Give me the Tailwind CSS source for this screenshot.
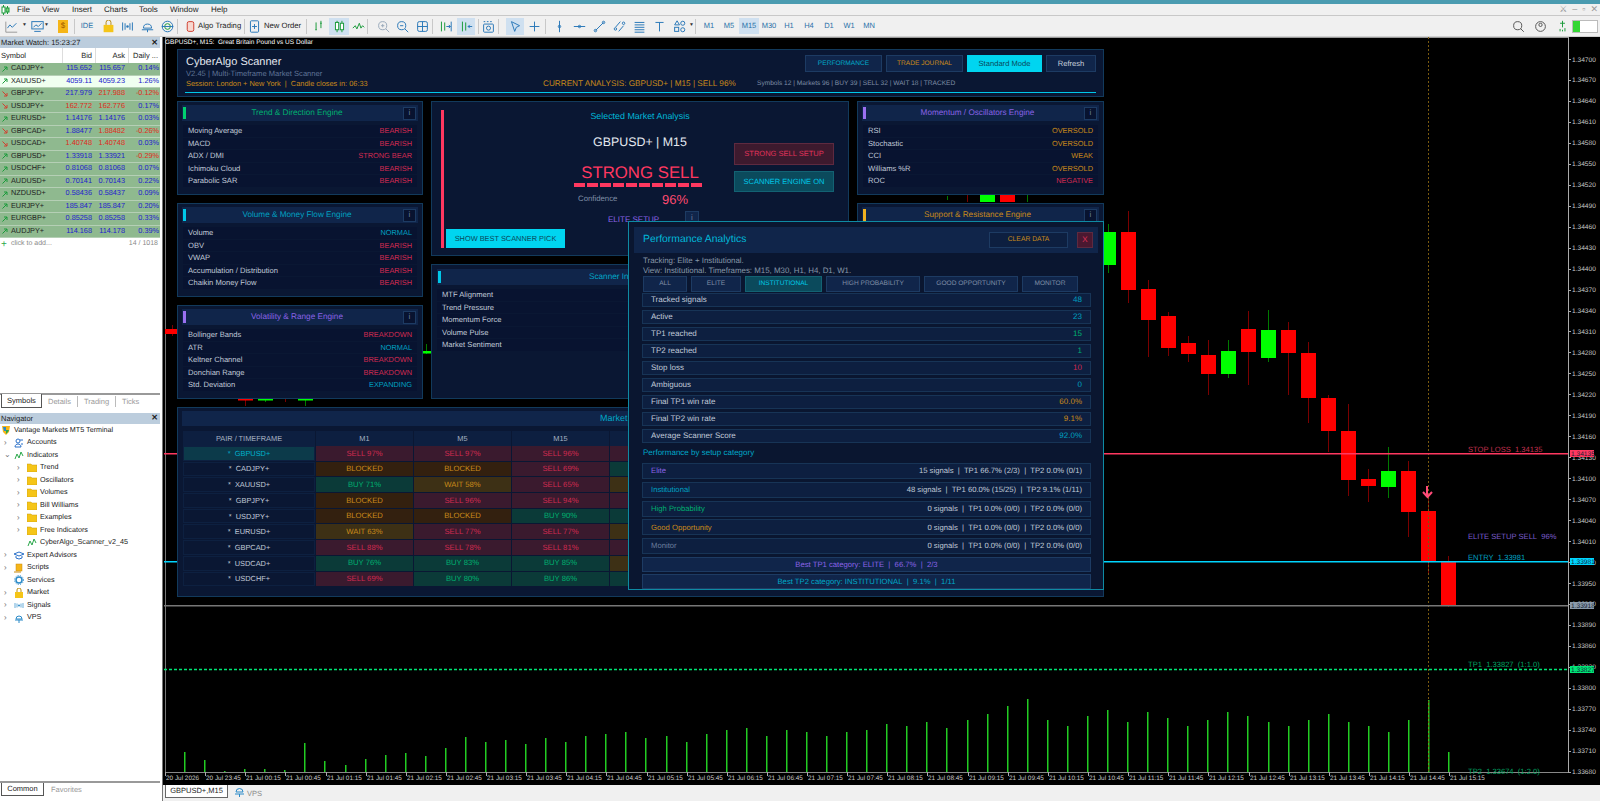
<!DOCTYPE html>
<html lang="en">
<head>
<meta charset="UTF-8">
<title>MT5 CyberAlgo Scanner</title>
<script src="https://cdn.jsdelivr.net/npm/@tailwindcss/browser@4"></script>
</head>
<body class="w-[1600px] h-[801px] overflow-hidden bg-[#f0f0f0] text-black font-['Liberation_Sans',sans-serif] [text-rendering:geometricPrecision]">

<!-- title strip -->
<div class="h-[4px] bg-[#4a9bb0]"></div>

<!-- menu -->
<div class="h-[12px] flex items-center border-b border-[#c8c8c8] text-[8px] text-[#222] relative">
  <svg class="ml-[1px] w-[9px] h-[10px]" viewBox="0 0 9 10"><path d="M2.5 0v10M6.5 1v8" stroke="#1a9a3a"/><rect x="1" y="2" width="3" height="6" fill="#fff" stroke="#1a9a3a"/><rect x="5" y="3" width="3" height="4" fill="#7ad07a" stroke="#1a9a3a"/></svg>
  <span class="ml-[7px] w-[25px]">File</span><span class="w-[30px]">View</span><span class="w-[32px]">Insert</span><span class="w-[35px]">Charts</span><span class="w-[31px]">Tools</span><span class="w-[41px]">Window</span><span>Help</span>
  <div class="ml-auto mr-[2px] flex items-center gap-[5px] text-[#999] text-[9px]"><span>⚔</span><span>–</span><span>▫</span><span>✕</span></div>
</div>

<!-- toolbar -->
<div id="toolbar" class="h-[21px] flex items-center border-b border-[#d0d0d0] text-[7.7px] text-[#222]"></div>

<div class="flex h-[764px]">
  <!-- left column -->
  <aside class="w-[163px] shrink-0 flex flex-col bg-white pr-[2px] border-r border-[#777]">
    <div class="h-[11px] bg-[#bccddd] flex items-center justify-between pl-[1px] pr-[2px] text-[7.5px] text-[#222]"><span>Market Watch: 15:23:27</span><span class="font-bold text-[8px]">✕</span></div>
    <div class="h-[15px] grid grid-cols-[62px_33px_33px_33px] items-center text-[7.5px] text-[#222]">
      <span class="pl-[1px]">Symbol</span><span class="text-right pr-[3px] border-l border-[#ddd] h-full leading-[15px]">Bid</span><span class="text-right pr-[3px] border-l border-[#ddd] h-full leading-[15px]">Ask</span><span class="text-right pr-[3px] border-l border-[#ddd] h-full leading-[15px]">Daily ...</span>
    </div>
    <div id="watch"></div>
    <div class="h-[13px] flex items-center text-[7px] text-[#888]"><span class="text-[#2aa84a] text-[10px] w-[11px] pl-[1px] leading-none">+</span><span>click to add...</span><span class="ml-auto mr-[2px]">14 / 1018</span></div>
    <div class="h-[141.6px] shrink-0"></div>
    <div class="h-[15px] border-t-2 border-[#999] flex text-[7.5px] text-[#999] items-center">
      <span class="ml-[1px] w-[41px] h-[14px] -mt-[1px] flex items-center justify-center bg-white border-l border-r border-b border-[#555] text-[#222]">Symbols</span>
      <span class="ml-[6px] pr-[6px] border-r border-[#bbb]">Details</span><span class="ml-[6px] pr-[6px] border-r border-[#bbb]">Trading</span><span class="ml-[6px]">Ticks</span>
    </div>
    <div class="mt-[5px] h-[11px] bg-[#bccddd] flex items-center justify-between pl-[1px] pr-[2px] text-[7.5px] text-[#222]"><span>Navigator</span><span class="font-bold text-[8px]">✕</span></div>
    <div id="nav"></div>
    <div class="flex-1"></div>
    <div class="h-[15px] border-t-2 border-[#999] flex text-[7.5px] text-[#999] items-center mb-[5px]">
      <span class="ml-[1px] w-[43px] h-[13px] -mt-[1px] flex items-center justify-center bg-white border-l border-r border-b border-[#555] text-[#222]">Common</span>
      <span class="ml-[7px]">Favorites</span>
    </div>
  </aside>

  <!-- chart -->
  <main class="flex-1 flex flex-col min-w-0">
    <div class="relative h-[748px] bg-black overflow-hidden">
      <svg id="chart" class="absolute inset-0" width="1437" height="748" viewBox="163 37 1437 748"></svg>
      <div class="absolute left-[2px] top-[1px] text-[6.5px] text-white">GBPUSD+, M15:&nbsp; Great Britain Pound vs US Dollar</div>

      <!-- scanner overlay -->
      <div class="absolute left-[14px] top-[12px] w-[927px] flex flex-col gap-[4px] text-[#c0cad8]">
        <div class="h-[48px] bg-[#0a1733] border border-[#123a5c] pl-[8px] pr-[7px] relative">
          <div class="flex items-start justify-between">
            <div>
              <div class="mt-[6px] text-[11px] leading-[13px] text-[#e4e8f0]">CyberAlgo Scanner</div>
              <div class="text-[7.6px] leading-[9px] text-[#5f7396]">V2.45 | Multi-Timeframe Market Scanner</div>
              <div class="mt-[0.5px] text-[7.4px] leading-[9px] text-[#c98a1a]">Session: London + New York&nbsp; |&nbsp; Candle closes in: 06:33</div>
            </div>
            <div class="mt-[5px] flex gap-[4px] text-[6.6px]">
              <span class="w-[77px] h-[17px] flex items-center justify-center bg-[#10254a] border border-[#1d3b63] text-[#00a8c8]">PERFORMANCE</span>
              <span class="w-[77px] h-[17px] flex items-center justify-center bg-[#10254a] border border-[#1d3b63] text-[#c98a1a]">TRADE JOURNAL</span>
              <span class="w-[75px] h-[17px] flex items-center justify-center bg-[#00d5f0] text-[#0a4a5c] text-[7.6px]">Standard Mode</span>
              <span class="w-[50px] h-[17px] flex items-center justify-center bg-[#10254a] border border-[#1d3b63] text-[#c8d0dc] text-[7.6px]">Refresh</span>
            </div>
          </div>
          <div class="absolute left-[365px] top-[29px] text-[8.2px] leading-[10px] text-[#c98a1a] whitespace-nowrap">CURRENT ANALYSIS: GBPUSD+ | M15 | SELL 96%</div>
          <div class="absolute left-[579px] top-[29px] text-[6.6px] leading-[9px] text-[#7f8ea6] whitespace-nowrap">Symbols 12 | Markets 96 | BUY 39 | SELL 32 | WAIT 18 | TRACKED</div>
          <div class="absolute left-[7px] right-[7px] bottom-[3px] h-[1.5px] bg-[#00c8e8]"></div>
        </div>

        <div class="grid grid-cols-[246px_418px_247px] gap-x-[8px]">
          <div id="colL" class="flex flex-col gap-[8px]"></div>
          <div class="flex flex-col gap-[8px]">
            <div class="h-[155px] bg-[#0a1733] border border-[#123a5c] relative flex">
              <div class="ml-[9px] mt-[8px] w-[3px] h-[138px] bg-[#ff3860]"></div>
              <div class="absolute left-0 right-0 top-[9px] text-center text-[8.9px] leading-[10px] text-[#00b8d9]">Selected Market Analysis</div>
              <div class="absolute left-0 right-0 top-[33px] text-center text-[12.4px] leading-[15px] text-[#e4e8f0]">GBPUSD+ | M15</div>
              <div class="absolute left-0 right-0 top-[61px] text-center text-[16.8px] leading-[20px] text-[#ff3860]">STRONG SELL</div>
              <div class="absolute left-[142px] top-[81px] flex gap-[2px]" id="dash"></div>
              <div class="absolute left-[146px] top-[92px] text-[7.8px] leading-[10px] text-[#7f8ea6]">Confidence</div>
              <div class="absolute left-[230px] top-[90px] text-[13px] leading-[15px] text-[#ff4a70]">96%</div>
              <div class="absolute left-[176px] top-[113px] text-[8px] leading-[10px] text-[#8a63e6]">ELITE SETUP</div>
              <div class="absolute left-[253px] top-[109px] w-[14px] h-[14px] bg-[#10254a] border border-[#1d3b63] text-[8px] flex items-center justify-center text-[#6b7d9e]">i</div>
              <div class="absolute left-[302px] top-[41px] w-[100px] h-[22px] flex items-center justify-center bg-[#3d1a2e] border border-[#5e2a40] text-[7.5px] text-[#e0325a]">STRONG SELL SETUP</div>
              <div class="absolute left-[302px] top-[69px] w-[100px] h-[21px] flex items-center justify-center bg-[#0b4a5c] border border-[#136273] text-[7.5px] text-[#00c8e8]">SCANNER ENGINE ON</div>
              <div class="absolute left-[14px] top-[127px] w-[119px] h-[19px] flex items-center justify-center bg-[#00d5f0] text-[7.4px] text-[#0a4a5c]">SHOW BEST SCANNER PICK</div>
            </div>
            <div class="h-[135px] bg-[#0a1733] border border-[#123a5c] px-[5px] pt-[4px]">
              <div class="h-[16px] bg-[#10254a] flex items-center relative"><span class="ml-[1px] w-[3px] h-[12px] bg-[#00c8e8]"></span><span class="absolute inset-0 flex items-center justify-center text-[8.2px] text-[#00a8c8]">Scanner Intelligence Engine</span></div>
              <div id="intel" class="mt-[4px] flex flex-col gap-[1px]"></div>
            </div>
          </div>
          <div id="colR" class="flex flex-col gap-[8px]"></div>
        </div>

        <div class="mt-[4px] h-[190px] bg-[#0a1733] border border-[#123a5c] px-[4px] pt-[3px]">
          <div class="h-[15px] bg-[#10254a] flex items-center pl-[418px] text-[9px] text-[#00a8c8]">Market</div>
          <div id="matrix" class="mt-[5px] ml-[1px] grid grid-cols-[132px_97px_97px_97px_97px_97px_97px_97px] gap-x-[1px]"></div>
        </div>
      </div>

      <!-- performance popup -->
      <div class="absolute left-[465px] top-[184px] w-[476px] h-[369px] bg-[#0a1630] border border-[#0e8aa3] px-[5px] pt-[5px] text-[8px] text-[#c0cad8]">
        <div class="h-[26px] bg-[#10254a] flex items-center pl-[9px] pr-[5px]">
          <span class="text-[10.4px] text-[#00b8d9]">Performance Analytics</span>
          <span class="ml-auto w-[79px] h-[16px] flex items-center justify-center bg-[#0d1f40] border border-[#1d3b63] text-[6.8px] text-[#c98a1a]">CLEAR DATA</span>
          <span class="ml-[9px] w-[16px] h-[16px] flex items-center justify-center bg-[#4a1830] border border-[#5e2a40] text-[8px] text-[#e0325a]">X</span>
        </div>
        <div class="ml-[9px] mt-[3px] text-[7.9px] leading-[10px] text-[#8898a8]">Tracking: Elite + Institutional.<br>View: Institutional. Timeframes: M15, M30, H1, H4, D1, W1.</div>
        <div class="ml-[9px] flex gap-[4px] text-[6.6px] text-[#7f8ea6]">
          <span class="w-[44px] h-[16px] flex items-center justify-center bg-[#10254a] border border-[#1d3b63]">ALL</span>
          <span class="w-[50px] h-[16px] flex items-center justify-center bg-[#10254a] border border-[#1d3b63]">ELITE</span>
          <span class="w-[77px] h-[16px] flex items-center justify-center bg-[#0b4a5c] border border-[#136273] text-[#00c8e8]">INSTITUTIONAL</span>
          <span class="w-[94px] h-[16px] flex items-center justify-center bg-[#10254a] border border-[#1d3b63]">HIGH PROBABILITY</span>
          <span class="w-[94px] h-[16px] flex items-center justify-center bg-[#10254a] border border-[#1d3b63]">GOOD OPPORTUNITY</span>
          <span class="w-[56px] h-[16px] flex items-center justify-center bg-[#10254a] border border-[#1d3b63]">MONITOR</span>
        </div>
        <div id="stats" class="ml-[8px] mr-[7px] mt-[1px] flex flex-col gap-[3px]"></div>
        <div class="ml-[9px] mt-[5px] text-[8px] leading-[10px] text-[#00a8c8]">Performance by setup category</div>
        <div id="cats" class="ml-[8px] mr-[7px] mt-[5px] flex flex-col gap-[2.8px]"></div>
        <div class="ml-[8px] mr-[7px] mt-[3px] flex flex-col gap-[2px] text-[7.7px]">
          <div class="h-[15px] bg-[#10254a] border border-[#1d3b63] flex items-center justify-center text-[#8a63e6]">Best TP1 category: ELITE&nbsp; |&nbsp; 66.7%&nbsp; |&nbsp; 2/3</div>
          <div class="h-[15px] bg-[#10254a] border border-[#1d3b63] flex items-center justify-center text-[#00a8c8]">Best TP2 category: INSTITUTIONAL&nbsp; |&nbsp; 9.1%&nbsp; |&nbsp; 1/11</div>
        </div>
      </div>
    </div>

    <!-- chart tabs -->
    <div class="h-[16px] flex items-start text-[7.5px] text-[#222]">
      <span class="ml-[2px] w-[63px] h-[13px] flex items-center justify-center bg-white border-l border-r border-b border-[#666]">GBPUSD+,M15</span>
      <svg class="ml-[6px] mt-[1px] w-[11px] h-[12px]" viewBox="0 0 11 12"><path d="M2 6a3.5 3.5 0 0 1 7 0zM1 8h9M5.5 8v3" fill="none" stroke="#2a8ac8"/></svg>
      <span class="ml-[2px] mt-[3px] text-[#888]">VPS</span>
    </div>
  </main>
</div>

<script>
// market watch
const up = '<svg class="w-[6px] h-[6px]" viewBox="0 0 6 6"><path d="M.5 5.5L5 1M2 1h3v3" fill="none" stroke="#1a9a3a"/></svg>';
const dn = '<svg class="w-[6px] h-[6px]" viewBox="0 0 6 6"><path d="M.5 .5L5 5M2 5h3V2" fill="none" stroke="#d04030"/></svg>';
const watchRows = [
  ['CADJPY+','115.652','115.657','0.14%',1,1,1,1],['XAUUSD+','4059.11','4059.23','1.26%',1,1,1,1],
  ['GBPJPY+','217.979','217.988','-0.12%',0,1,0,0],['USDJPY+','162.772','162.776','0.17%',0,0,0,1],
  ['EURUSD+','1.14176','1.14176','0.03%',1,1,1,1],['GBPCAD+','1.88477','1.88482','-0.26%',0,1,0,0],
  ['USDCAD+','1.40748','1.40748','0.03%',0,0,0,1],['GBPUSD+','1.33918','1.33921','-0.29%',1,1,1,0],
  ['USDCHF+','0.81068','0.81068','0.07%',1,1,1,1],['AUDUSD+','0.70141','0.70143','0.22%',1,1,1,1],
  ['NZDUSD+','0.58436','0.58437','0.09%',1,1,1,1],['EURJPY+','185.847','185.847','0.20%',1,1,1,1],
  ['EURGBP+','0.85258','0.85258','0.33%',1,1,1,1],['AUDJPY+','114.168','114.178','0.39%',1,1,1,1]];
document.getElementById('watch').innerHTML = watchRows.map((r,i) => {
  const c = v => v ? 'text-[#2222cc]' : 'text-[#e02a20]';
  const bg = i==1 ? 'bg-[#f0fff0]' : 'bg-[#8fb98f]';
  return `<div class="h-[12.53px] grid grid-cols-[62px_33px_33px_33px] items-center text-[7.3px] ${bg} border-b border-[#b5cfb5]">
    <span class="flex items-center gap-[3px] pl-[2px] text-[#222]">${r[4]?up:dn}${r[0]}</span>
    <span class="text-right pr-[3px] ${c(r[5])}">${r[1]}</span><span class="text-right pr-[3px] ${c(r[6])}">${r[2]}</span><span class="text-right pr-[2px] ${c(r[7])}">${r[3]}</span></div>`;
}).join('');

// navigator tree
const navIco = {
  folder:'<svg class="w-[10px] h-[9px]" viewBox="0 0 10 9"><path d="M0 1h4l1 1h5v7H0z" fill="#f5c518" stroke="#c99a10" stroke-width=".5"/></svg>',
  ind:'<svg class="w-[10px] h-[9px]" viewBox="0 0 10 9"><path d="M1 8l2-5 2 4 2-6 2 4" fill="none" stroke="#2aa84a"/></svg>',
  acc:'<svg class="w-[10px] h-[10px]" viewBox="0 0 10 10"><circle cx="4" cy="3" r="2" fill="none" stroke="#2a70c8"/><path d="M1 9c0-4 6-4 6 0zM6 2h3M7 6h2" fill="none" stroke="#2a70c8"/></svg>',
  ea:'<svg class="w-[10px] h-[9px]" viewBox="0 0 10 9"><path d="M0 3l5-2 5 2-5 2zM2 5v2l3 1 3-1V5" fill="none" stroke="#2a70c8"/></svg>',
  script:'<svg class="w-[10px] h-[10px]" viewBox="0 0 10 10"><rect x="2" y="1" width="6" height="7" fill="#f5b518" stroke="#c98a10" stroke-width=".5"/><path d="M0 9h7" stroke="#c98a10"/></svg>',
  gear:'<svg class="w-[10px] h-[10px]" viewBox="0 0 10 10"><circle cx="5" cy="5" r="3" fill="none" stroke="#2a8ac8" stroke-width="1.5"/><circle cx="5" cy="5" r="4.5" fill="none" stroke="#2a8ac8" stroke-dasharray="1 1.4"/></svg>',
  bag:'<svg class="w-[10px] h-[10px]" viewBox="0 0 10 10"><path d="M1 4h8v6H1z" fill="#f5c518"/><path d="M3 4V2a2 2 0 0 1 4 0v2" fill="none" stroke="#b88a10"/></svg>',
  sig:'<svg class="w-[10px] h-[9px]" viewBox="0 0 10 9"><circle cx="5" cy="4.500" r="1" fill="#2a8ac8"/><path d="M3 2.500v4M7 2.500v4M1 2v5M9 2v5" stroke="#2a8ac8" stroke-width=".7"/></svg>',
  vps:'<svg class="w-[10px] h-[10px]" viewBox="0 0 10 10"><path d="M2 6a3 3 0 0 1 6 0zM1 7h8M5 7v3" fill="none" stroke="#2a8ac8"/></svg>',
  vm:'<svg class="w-[10px] h-[10px]" viewBox="0 0 10 10"><path d="M1 1h8l-1 6-3 3-3-3z" fill="#f5b518"/><path d="M2 2h3v4H3z" fill="#2a8ac8"/><path d="M5 5h3l-1 2-2 2z" fill="#2aa84a"/></svg>'};
const navRows = [
  [0,'vm','Vantage Markets MT5 Terminal',''],[1,'acc','Accounts','›'],[1,'ind','Indicators','⌄'],
  [2,'folder','Trend','›'],[2,'folder','Oscillators','›'],[2,'folder','Volumes','›'],[2,'folder','Bill Williams','›'],
  [2,'folder','Examples','›'],[2,'folder','Free Indicators','›'],[2,'ind','CyberAlgo_Scanner_v2_45',''],
  [1,'ea','Expert Advisors','›'],[1,'script','Scripts','›'],[1,'gear','Services',''],[1,'bag','Market','›'],[1,'sig','Signals','›'],[1,'vps','VPS','›']];
const navPad = ['pl-[1px]','pl-[2px]','pl-[15px]'];
document.getElementById('nav').innerHTML = navRows.map(r => `<div class="h-[12.53px] flex items-center text-[7.2px] text-[#222] whitespace-nowrap ${navPad[r[0]]}">
  ${r[0] ? `<span class="w-[12px] text-[#777] text-[8px] leading-none pl-[2px]">${r[3]}</span>` : ''}
  <span class="flex items-center gap-[3px]">${navIco[r[1]]}<span>${r[2]}</span></span></div>`).join('');

// toolbar: [width of slot, html]
const ti = (w, svg) => `<span class="flex items-center justify-center shrink-0" style="width:${w}px">${svg}</span>`;
const s = (body) => `<svg class="w-[13px] h-[13px]" viewBox="0 0 16 16" fill="none" stroke-width="1.2">${body}</svg>`;
const sep = '<span class="w-[1px] h-[15px] bg-[#c8c8c8] shrink-0"></span>';
const arrow = '<span class="text-[5px] text-[#333] w-[8px] shrink-0">▼</span>';
const arrowTight = '<span class="text-[5px] text-[#333] w-[6px] shrink-0">▼</span>';
const blue = 'stroke="#2a78b8"', grn = 'stroke="#1a9a3a"', gry = 'stroke="#9ab"';
const tf = (t, on) => `<span class="shrink-0 w-[20px] h-[16px] flex items-center justify-center text-[7.5px] text-[#2a70a8] ${on ? 'bg-[#cfe0f0]' : ''}">${t}</span>`;
const tbOn = (svg, w) => `<span class="flex items-center justify-center shrink-0 h-[17px] bg-[#cfe0f0]" style="width:${w}px">${svg}</span>`;
document.getElementById('toolbar').innerHTML = [
  ti(22,s(`<path d="M1 2v13h14" stroke="#999"/><path d="M3 10l3-4 3 3 5-5" ${blue}/>`)),arrow,
  ti(14,s(`<rect x="1" y="2" width="14" height="9" ${blue}/><path d="M3 9l3-3 3 2 4-4" ${blue}/><path d="M4 14h8" ${blue}/>`)),arrow,
  ti(22,'<span class="w-[10px] h-[13px] bg-[#f5b518] text-[8px] text-[#a05a00] flex items-center justify-center">$</span>'),sep,
  ti(24,'<span class="text-[#2a70a8] text-[7.5px]">IDE</span>'),
  ti(18,s(`<path d="M2 6h12v9H2z" fill="#f5c518"/><path d="M5 6V3a3 3 0 0 1 6 0v3" stroke="#b88a10"/>`)),
  ti(20,s(`<circle cx="8" cy="8" r="1.500" fill="#2a78b8"/><path d="M5 4v8M11 4v8M2 3v10M14 3v10" ${blue}/>`)),
  ti(20,s(`<path d="M3 10a5 5 0 0 1 10 0zM1 12h14M8 12v3" ${blue}/>`)),
  ti(20,s(`<circle cx="8" cy="8" r="6.500" ${blue}/><circle cx="8" cy="8" r="3.500" ${grn}/><path d="M1 8h14" ${blue}/>`)),sep,
  ti(4,''),ti(16,s(`<rect x="4" y="2" width="8" height="12" rx="2" fill="#f8d8d0" stroke="#d04030"/>`)),
  '<span class="shrink-0 w-[46px]">Algo Trading</span>',sep,
  ti(19,s(`<rect x="3" y="1" width="10" height="14" rx="1" ${blue}/><path d="M8 5v6M5 8h6" ${blue}/>`)),
  '<span class="shrink-0 w-[42px]">New Order</span>',sep,
  ti(22,s(`<path d="M5 3v9M4 12h2M11 1v9M10 4h2" ${grn}/>`)),
  tbOn(s(`<path d="M5 1v14M11 1v14" ${grn}/><rect x="3" y="3" width="4" height="9" fill="#fff" ${grn}/><rect x="9" y="4" width="4" height="8" fill="#fff" ${grn}/>`),20),
  ti(18,s(`<path d="M1 10l3-3 2 4 3-7 2 6 2-3 2 2" ${grn}/>`)),sep,
  ti(5,''),ti(20,s(`<circle cx="7" cy="7" r="5" ${gry}/><path d="M11 11l4 4M5 7h4M7 5v4" ${gry}/>`)),
  ti(19,s(`<circle cx="7" cy="7" r="5" ${blue}/><path d="M11 11l4 4M5 7h4" ${blue}/>`)),
  ti(20,s(`<rect x="2" y="2" width="12" height="12" rx="2" ${blue}/><path d="M8 2v12M2 8h12" ${blue}/>`)),sep,
  ti(24,s(`<path d="M3 2v12M7 3v10" ${grn}/><path d="M9 8h5M12 6l2 2-2 2M15 2v12" ${blue}/>`)),
  tbOn(s(`<path d="M3 2v12M7 3v10" ${grn}/><path d="M15 8h-5M12 6l-2 2 2 2" ${blue}/>`),18),ti(3,''),sep,
  ti(19,s(`<rect x="2" y="5" width="12" height="10" rx="1" ${blue}/><circle cx="8" cy="10" r="2.500" ${blue}/><path d="M2 2h2M6 2h2M10 2h2" ${blue}/>`)),sep,
  ti(7,''),tbOn(s(`<path d="M3 2l10 5-4 2-2 5z" ${blue}/>`),18),
  ti(21,s(`<path d="M8 2v12M2 8h12" ${blue}/>`)),sep,
  ti(3,''),ti(20,s(`<path d="M8 1v14" ${blue}/><circle cx="8" cy="8" r="1.500" ${blue}/>`)),
  ti(20,s(`<path d="M1 8h14" ${blue}/><circle cx="8" cy="8" r="1.500" ${blue}/>`)),
  ti(20,s(`<path d="M3 13L13 3" ${blue}/><circle cx="3" cy="13" r="1.500" ${blue}/><circle cx="13" cy="3" r="1.500" ${blue}/>`)),
  ti(20,s(`<path d="M3 9l6-7M7 14l6-7" ${blue}/><circle cx="3" cy="11" r="1.500" ${blue}/><circle cx="13" cy="4" r="1.500" ${blue}/>`)),
  ti(20,s(`<path d="M2 3h12M2 6h12M2 9h12M2 12h12M2 15h12" ${blue}/>`)),
  ti(20,s(`<path d="M3 3h10M8 3v11" ${blue}/>`)),
  ti(20,s(`<path d="M5 1l3 5H2z" ${blue}/><circle cx="12" cy="4" r="2.500" ${blue}/><rect x="2" y="9" width="5" height="5" ${blue}/><circle cx="12" cy="12" r="2.500" ${blue}/>`)),arrowTight,sep,
  ti(3,''),tf('M1'),tf('M5'),tf('M15',true),tf('M30'),tf('H1'),tf('H4'),tf('D1'),tf('W1'),tf('MN'),
  '<span class="ml-auto flex items-center gap-[9px] mr-[2px] shrink-0">' +
  s(`<circle cx="7" cy="7" r="5" stroke="#555"/><path d="M10.500 10.500l4 4" stroke="#555"/>`) +
  s(`<circle cx="8" cy="8" r="6" stroke="#555"/><circle cx="8" cy="6" r="2" stroke="#555"/>`) +
  '<span class="flex items-center gap-[3px]">' + s(`<path d="M8 1v8M5 4h6M5 14v-3M8 14v-2M11 14v-4" ${grn}/>`) +
  '<span class="w-[26px] h-[13px] border border-[#bbb] bg-white flex"><span class="w-[7px] bg-[#33d633]"></span></span></span></span>'
].join('');

// scanner cards
const sell = 'text-[#d02a50]', cyan = 'text-[#00a0c0]', amber = 'text-[#c98a1a]';
function card(title, titleCls, accent, rows) {
  return `<div class="h-[94px] bg-[#0a1733] border border-[#123a5c] px-[5px] pt-[3px]">
    <div class="h-[16px] -mx-[1px] bg-[#10254a] flex items-center relative"><span class="ml-[1px] w-[3px] h-[12px] ${accent}"></span>
      <span class="absolute inset-0 flex items-center justify-center text-[8.2px] pr-[6px] ${titleCls}">${title}</span>
      <span class="relative ml-auto mr-[2px] w-[13px] h-[13px] bg-[#081330] border border-[#1d3b63] text-[8px] text-[#6b7d9e] flex items-center justify-center">i</span></div>
    <div class="mt-[4px] flex flex-col gap-[1px]">${rows.map(row).join('')}</div></div>`;
}
function row(r) {
  return `<div class="h-[11.5px] bg-[#081330] pl-[5px] pr-[5px] flex items-center justify-between text-[7.6px] text-[#c0cad8] whitespace-nowrap"><span>${r[0]}</span><span class="text-[7.4px] ${r[2] || ''}">${r[1]}</span></div>`;
}
document.getElementById('colL').innerHTML =
  card('Trend &amp; Direction Engine','text-[#00b070]','bg-[#00d070]',[['Moving Average','BEARISH',sell],['MACD','BEARISH',sell],['ADX / DMI','STRONG BEAR',sell],['Ichimoku Cloud','BEARISH',sell],['Parabolic SAR','BEARISH',sell]]) +
  card('Volume &amp; Money Flow Engine','text-[#00a0c0]','bg-[#00c8e8]',[['Volume','NORMAL',cyan],['OBV','BEARISH',sell],['VWAP','BEARISH',sell],['Accumulation / Distribution','BEARISH',sell],['Chaikin Money Flow','BEARISH',sell]]) +
  card('Volatility &amp; Range Engine','text-[#8a63e6]','bg-[#9a70f0]',[['Bollinger Bands','BREAKDOWN',sell],['ATR','NORMAL',cyan],['Keltner Channel','BREAKDOWN',sell],['Donchian Range','BREAKDOWN',sell],['Std. Deviation','EXPANDING',cyan]]);
document.getElementById('colR').innerHTML =
  card('Momentum / Oscillators Engine','text-[#8a63e6]','bg-[#9a70f0]',[['RSI','OVERSOLD',amber],['Stochastic','OVERSOLD',amber],['CCI','WEAK',amber],['Williams %R','OVERSOLD',amber],['ROC','NEGATIVE',sell]]) +
  card('Support &amp; Resistance Engine','text-[#c98a1a]','bg-[#f0b020]',[]);
document.getElementById('intel').innerHTML = ['MTF Alignment','Trend Pressure','Momentum Force','Volume Pulse','Market Sentiment'].map(t => row([t,''])).join('');
document.getElementById('dash').innerHTML = Array(10).fill('<span class="w-[11px] h-[4px] bg-[#ff3860]"></span>').join('');

// market matrix
const cellCls = {S:'bg-[#3a1a2e] text-[#d02a50]',B:'bg-[#33200f] text-[#c98a1a]',U:'bg-[#0b3a38] text-[#00b070]',W:'bg-[#3d3015] text-[#c98a1a]'};
const cellTxt = {S:'SELL',B:'BLOCKED',U:'BUY',W:'WAIT'};
const matrix = [
  ['GBPUSD+','S97','S97','S96','S'],['CADJPY+','B','B','S69','U'],['XAUUSD+','U71','W58','S65','W'],
  ['GBPJPY+','B','S96','S94','S'],['USDJPY+','B','B','U90','U'],['EURUSD+','W63','S77','S77','W'],
  ['GBPCAD+','S88','S78','S81','S'],['USDCAD+','U76','U83','U85','W'],['USDCHF+','S69','U80','U86','U']];
let mx = ['PAIR / TIMEFRAME','M1','M5','M15','','','',''].map(t => `<div class="h-[15px] bg-[#0d1f40] flex items-center justify-center text-[7.4px] text-[#a8b4c4]">${t}</div>`).join('');
matrix.forEach((r,i) => {
  mx += `<div class="h-[14.7px] mb-[1px] flex items-center justify-center text-[7.4px] border border-[#0d2040] ${i==0 ? 'bg-[#0c3a4a] text-[#00b0cc]' : 'bg-[#0a1733] text-[#c0cad8]'}">*&nbsp; ${r[0]}</div>`;
  for (let c = 1; c <= 7; c++) {
    const v = r[Math.min(c,4)], k = v[0], n = v.slice(1);
    mx += `<div class="h-[14.7px] mb-[1px] flex items-center justify-center text-[7.7px] ${cellCls[k]}">${c <= 3 ? cellTxt[k] + (n ? ' ' + n + '%' : '') : ''}</div>`;
  }
});
document.getElementById('matrix').innerHTML = mx;

// performance rows
const g = 'text-[#00b070]', b = 'text-[#00a0c0]';
document.getElementById('stats').innerHTML = [['Tracked signals','48',b],['Active','23',b],['TP1 reached','15',g],['TP2 reached','1',g],['Stop loss','10',sell],['Ambiguous','0',b],['Final TP1 win rate','60.0%',amber],['Final TP2 win rate','9.1%',amber],['Average Scanner Score','92.0%',b]]
  .map(r => `<div class="h-[14px] bg-[#0d1f40] border border-[#173456] pl-[8px] pr-[8px] flex items-center justify-between text-[8px] text-[#c0cad8]"><span>${r[0]}</span><span class="${r[2]}">${r[1]}</span></div>`).join('');
document.getElementById('cats').innerHTML = [['Elite','15 signals&nbsp; |&nbsp; TP1 66.7% (2/3)&nbsp; |&nbsp; TP2 0.0% (0/1)','text-[#8a63e6]'],['Institutional','48 signals&nbsp; |&nbsp; TP1 60.0% (15/25)&nbsp; |&nbsp; TP2 9.1% (1/11)',b],['High Probability','0 signals&nbsp; |&nbsp; TP1 0.0% (0/0)&nbsp; |&nbsp; TP2 0.0% (0/0)',g],['Good Opportunity','0 signals&nbsp; |&nbsp; TP1 0.0% (0/0)&nbsp; |&nbsp; TP2 0.0% (0/0)',amber],['Monitor','0 signals&nbsp; |&nbsp; TP1 0.0% (0/0)&nbsp; |&nbsp; TP2 0.0% (0/0)','text-[#6b7d9e]']]
  .map(r => `<div class="h-[16px] bg-[#0d1f40] border border-[#173456] pl-[8px] pr-[8px] flex items-center justify-between text-[7.7px] text-[#c0cad8]"><span class="${r[2]}">${r[0]}</span><span>${r[1]}</span></div>`).join('');

// chart canvas, page coordinates
let svg = '';
const rect = (x,y,w,h,f) => `<rect x="${x}" y="${y}" width="${w}" height="${h}" fill="${f}"/>`;
const label = (x,y,t,f,sz) => `<text x="${x}" y="${y}" fill="${f}" font-size="${sz}">${t}</text>`;
svg += rect(165,37,1403,1,'#999') + rect(165,37,1,735,'#777') + rect(1568,37,1,735,'#aaa') + rect(165,772,1403,1,'#888');

// volume
const vol = [20,12,1,3,3,2,29,11,7,13,17,19,16,24,35,30,32,28,34,30,36,38,40,34,36,30,38,42,44,36,42,40,36,40,42,48,46,50,44,52,58,66,73,52,46,56,62,50,60,54,46,52,60,56,50,46,52,58,50,46,40,52,72,20];
vol.forEach((h,k) => { svg += rect(Math.round(184+20.065*k),772-h,1.5,h,'#22cc22'); });

// candles [x, top wick, bottom wick, body top, body bottom, up]
const candles = [[172,325,336,329,334,0],[245,399,406,399,400.500,0],[265,399,402,399,400.500,1],[285,399,402,400,400,0],[305,399,406,399,400.500,1],
  [426,344,354,351,353.500,1],[947,196,200,200,200,1],[967,194,202,202,202,0],[987,194,202,194,202,1],[1007,194,202,194,202,0],[1027,194,202,202,202,1],
  [1108,224,273,232,265,1],[1128,211,303,232,290,0],[1148,280,357,289,320,0],[1168,312,356,316,348,0],[1188,336,362,343,354,0],[1208,340,395,355,374,0],[1228,340,378,351,374,1],
  [1248,311,385,329,352,0],[1268,310,362,330,358,1],[1288,322,395,330,353,0],[1308,342,423,353,398,0],[1328,395,452,398,431,0],[1348,404,496,431,480,0],
  [1368,469,502,479,486,0],[1388,447,498,471,487,1],[1408,461,537,471,512,0],[1428,499,573,511,561,0],[1448,556,607,562,606,0]];
candles.forEach(c => {
  const body = c[5] ? '#00ff00' : '#ff0000', wick = c[5] ? '#007a00' : '#7a0000';
  svg += rect(c[0],c[1],1,c[2]-c[1],wick) + rect(c[0]-7,c[3],15,c[4]-c[3],body);
});

// levels
svg += `<path d="M1428.500 37V772" stroke="#7a5a10" stroke-dasharray="2 2"/>`;
svg += rect(164,453,1404,1.500,'#ff3860') + rect(164,561,1404,1.500,'#00d5ff') + rect(164,605,1404,1.500,'#777');
svg += `<path d="M164 669.500H1568" stroke="#00e676" stroke-width="1.500" stroke-dasharray="3 2"/>`;
svg += label(1468,452,'STOP LOSS&#160; 1.34135','#c0304f',7.6) + label(1468,539,'ELITE SETUP SELL&#160; 96%','#7a5ccc',7.6) + label(1468,560,'ENTRY&#160; 1.33981','#00a0c0',7.6) + label(1468,667,'TP1&#160; 1.33827&#160; (1:1.0)','#00a060',7.6) + label(1468,774,'TP2&#160; 1.33674&#160; (1:2.0)','#00a060',7.6);
svg += `<path d="M1427 486l0 11M1423 492l4.500 5 4.500-5" fill="none" stroke="#ff4a78" stroke-width="2"/>`;

// price axis
for (let i = 0; i <= 34; i++) {
  const y = 59 + i * 20.96, p = (1.347 - i * 0.0003).toFixed(5);
  svg += rect(1568,Math.round(y),3,1,'#aaa') + label(1572,y+2.500,p,'#c8c8c8',6.6);
}
[[453,'1.34135','#ff3860'],[561,'1.33981','#00d5ff'],[605,'1.33918','#8a9aaa'],[669,'1.33827','#00e676']].forEach(l => {
  svg += rect(1570,l[0]-3,24,7,l[2]) + label(1571,l[0]+2.500,l[1],'#123',6.6);
});

// time axis
const times = ['20 Jul 2026','20 Jul 23:45'];
for (let m = 15; m <= 15*60+15; m += 30) times.push('21 Jul ' + String(Math.floor(m/60)).padStart(2,'0') + ':' + String(m%60).padStart(2,'0'));
times.forEach((t,n) => {
  const x = Math.round(165 + 40.13 * n);
  svg += rect(x,772,1,4,'#aaa') + label(x+1,780,t,'#c8c8c8',6.4);
});
document.getElementById('chart').innerHTML = svg;
</script>
</body>
</html>
